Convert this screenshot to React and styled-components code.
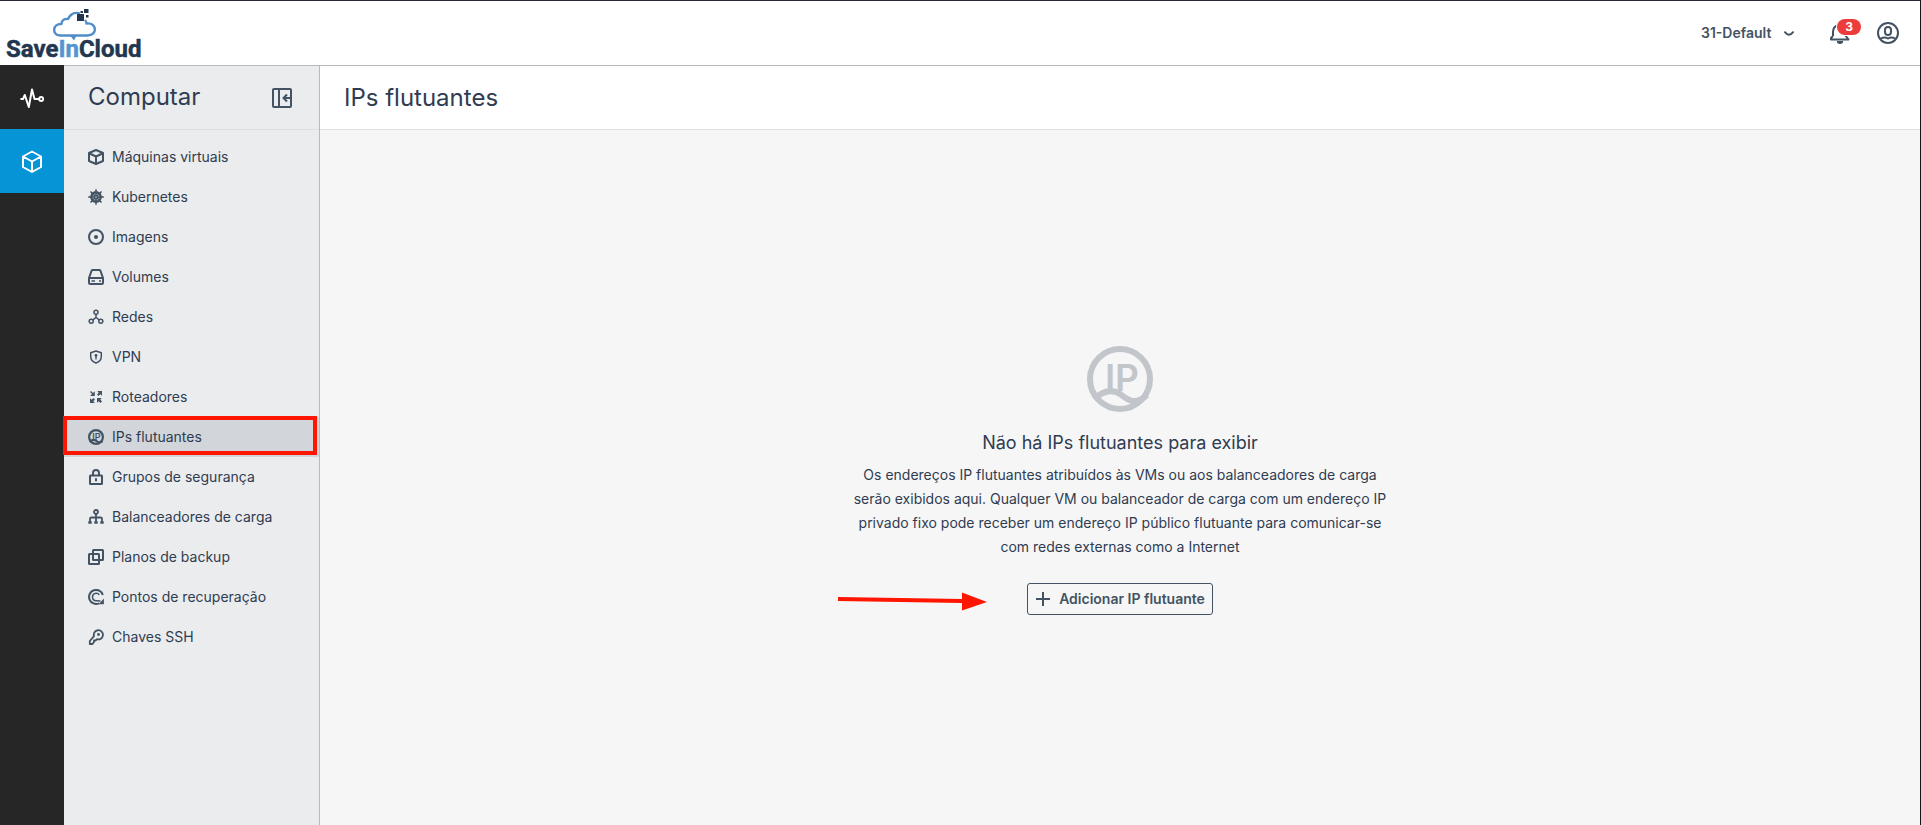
import React from "react";
import styled, { createGlobalStyle } from "styled-components";

const color = {
  ink: "#2f3c51",
  icon: "#435363",
  line: "#b7bbc0",
  softLine: "#dddfe2",
  panel: "#ebecee",
  selected: "#d2d5da",
  canvas: "#f6f6f6",
  rail: "#262626",
  accent: "#0594d6",
  alert: "#ed3a3b",
  mark: "#ff1500",
  faded: "#c2c6cb",
};

const GlobalStyle = createGlobalStyle`
  *, *::before, *::after { box-sizing: border-box; }
  body { margin: 0; font-family: Inter, "Liberation Sans", sans-serif; font-size: 14px; color: ${color.ink}; }
  button, select { font: inherit; color: inherit; }
`;

const Page = styled.div`
  min-height: 100vh;
  display: flex;
  flex-direction: column;
  border-top: 1px solid #2e2639;
  border-right: 1px solid #16161c;
  background: #fff;
`;

const TopBar = styled.header`
  height: 64px;
  display: flex;
  align-items: center;
  justify-content: space-between;
  padding: 0 20px 0 4px;
`;

const LogoLink = styled.a`
  display: block;
  height: 64px;
`;

const TopActions = styled.div`
  display: flex;
  align-items: center;
`;

const ProjectPicker = styled.label`
  position: relative;
  display: flex;
  align-items: center;
  margin-right: 34px;
`;

const ProjectSelect = styled.select`
  appearance: none;
  border: 0;
  background: transparent;
  padding: 0 22px 0 0;
  font-weight: 600;
  line-height: 20px;
  color: ${color.icon};
`;

const PickerChevron = styled.svg`
  position: absolute;
  right: 0;
  top: 8px;
  pointer-events: none;
`;

const IconButton = styled.button`
  position: relative;
  display: flex;
  padding: 0;
  border: 0;
  background: transparent;
  color: ${color.icon};
  margin-right: ${(p) => p.$after || 0}px;
`;

const Badge = styled.span`
  position: absolute;
  left: 9px;
  top: -2px;
  width: 24px;
  height: 16px;
  border-radius: 8px;
  box-shadow: 0 0 0 1px #fff;
  background: ${color.alert};
  color: #fff;
  font-size: 12px;
  font-weight: 700;
  line-height: 16px;
  text-align: center;
`;

const Body = styled.div`
  flex: 1;
  display: grid;
  grid-template-columns: 64px 256px 1fr;
`;

const Rail = styled.nav`
  background: ${color.rail};
  display: flex;
  flex-direction: column;
`;

const RailLink = styled.a`
  height: 64px;
  display: flex;
  align-items: center;
  justify-content: center;
  color: #fff;
  background: ${(p) => (p.$active ? color.accent : "transparent")};
`;

const SidePanel = styled.aside`
  background: ${color.panel};
  border-top: 1px solid ${color.line};
  border-right: 1px solid ${color.line};
`;

const SideHeader = styled.div`
  height: 64px;
  display: flex;
  align-items: center;
  justify-content: space-between;
  padding: 0 26px 0 24px;
  border-bottom: 1px solid ${color.softLine};
`;

const SideTitle = styled.h2`
  margin: 0;
  padding-bottom: 2px;
  font-size: 24px;
  font-weight: 400;
  line-height: 32px;
`;

const Menu = styled.ul`
  list-style: none;
  margin: 0;
  padding: 7px 0;
`;

const MenuItem = styled.li`
  position: relative;
`;

const MenuLink = styled.a`
  height: 40px;
  display: flex;
  align-items: center;
  gap: 8px;
  padding: 0 24px;
  color: ${color.ink};
  text-decoration: none;
  background: ${(p) => (p.$active ? color.selected : "transparent")};

  svg { color: ${color.icon}; flex: none; }
`;

const MenuLabel = styled.span`
  padding-bottom: 2px;
`;

const Highlight = styled.span`
  position: absolute;
  inset: -1px 2px 2px -1px;
  border: 4px solid ${color.mark};
  pointer-events: none;
`;

const Main = styled.main`
  display: flex;
  flex-direction: column;
  background: ${color.canvas};
  border-top: 1px solid ${color.line};
`;

const MainHeader = styled.div`
  height: 64px;
  display: flex;
  align-items: center;
  padding: 0 24px;
  background: #fff;
  border-bottom: 1px solid ${color.softLine};
`;

const PageTitle = styled.h1`
  margin: 0;
  font-size: 24px;
  font-weight: 400;
  line-height: 32px;
`;

const EmptyState = styled.section`
  flex: 1;
  display: flex;
  flex-direction: column;
  align-items: center;
  justify-content: center;
  padding: 24px 24px 26px;
  text-align: center;
`;

const EmptyIcon = styled.div`
  height: 80px;
  color: ${color.faded};
`;

const EmptyTitle = styled.h3`
  margin: 12px 0 8px;
  font-size: 18px;
  font-weight: 400;
  line-height: 24px;
`;

const EmptyText = styled.p`
  margin: 0 0 24px;
  max-width: 544px;
  line-height: 24px;
`;

const AddButton = styled.button`
  position: relative;
  height: 32px;
  display: flex;
  align-items: center;
  gap: 8px;
  padding: 0 7px;
  border: 1px solid ${color.icon};
  border-radius: 3px;
  background: transparent;
  font-weight: 600;
  color: ${color.icon};
`;

const Arrow = styled.svg`
  position: absolute;
  right: calc(100% + 41px);
  top: 8px;
  pointer-events: none;
`;

const Wordmark = styled.text`
  font-family: Roboto, "Liberation Sans", sans-serif;
  font-size: 24px;
  font-weight: 700;
  fill: #22374f;
  stroke: #22374f;
  stroke-width: 0.5px;
  stroke-linejoin: round;

  tspan { fill: #5593d1; stroke: #5593d1; }
`;

function Logo() {
  return (
    <svg width="144" height="64" viewBox="0 0 144 64" role="img" aria-label="SaveInCloud">
      <path
        d="M56 34.500 C47.500 34 48.500 22.500 57.500 23 C57.500 19 61 17.500 64 18 C67 12 72 11 76 12.500 M81 19 C82 20 82.500 21 82.500 22.500 C93 21 94 34.500 83.500 34.500 H56"
        fill="none" stroke="#4f8dcb" strokeWidth="2.400" strokeLinejoin="round"
      />
      <path d="M66 34.500 H72.500 L70 39.500 Z" fill="#4f8dcb" />
      <path d="M73 13h7v7h-7z M80 8h4.500v4H80z M76.500 10h2.500v2h-2.500z M82 14h2.500v2.500H82z" fill="#22374f" />
      <Wordmark x="2" y="56">
        Save<tspan>In</tspan>Cloud
      </Wordmark>
    </svg>
  );
}

function Glyph({ size = 16, weight = 2, children }) {
  return (
    <svg width={size} height={size} viewBox="0 0 16 16" fill="none" stroke="currentColor" strokeWidth={weight} aria-hidden="true">
      {children}
    </svg>
  );
}

function FloatingIp({ size, box, weight }) {
  return (
    <svg width={size} height={size} viewBox={box} fill="none" stroke="currentColor" strokeWidth={weight} aria-hidden="true">
      <circle cx="40" cy="40" r={33 - weight / 2} />
      <path d="M14 60 C24 51 32 50 40 55 C48 61 55 67 67 56" />
      <text x="25 35" y="52" fontSize="37" fontWeight="600" fill="currentColor" stroke="none">IP</text>
    </svg>
  );
}

const spokes = [0, 45, 90, 135, 180, 225, 270, 315];

const icons = {
  cube: (
    <Glyph>
      <path d="M8 1 L15 4 V12 L8 15 L1 12 V4 Z M1.500 4.500 L8 7.500 L14.500 4.500 M8 7.500 V15" strokeLinejoin="round" />
    </Glyph>
  ),
  wheel: (
    <Glyph>
      <circle cx="8" cy="8" r="5.900" fill="currentColor" stroke="none" />
      {spokes.map((a) => (
        <g key={a} transform={`rotate(${a} 8 8)`}>
          <path d="M8 3 V0.200" strokeWidth="1.500" />
          <circle cx="9.200" cy="5.200" r="0.500" fill={color.panel} stroke="none" />
        </g>
      ))}
      <circle cx="8" cy="8" r="0.700" fill={color.panel} stroke="none" />
    </Glyph>
  ),
  disc: (
    <Glyph>
      <circle cx="8" cy="8" r="7" />
      <circle cx="8" cy="8" r="2" fill="currentColor" stroke="none" />
    </Glyph>
  ),
  drive: (
    <Glyph>
      <path d="M1 9 L3.500 1.800 Q3.800 1 4.700 1 H11.300 Q12.200 1 12.500 1.800 L15 9 V13.800 Q15 15 13.700 15 H2.300 Q1 15 1 13.800 Z M1 9 H15" strokeLinejoin="round" />
      <path d="M3.500 12 H7 M11 12 H13" strokeWidth="1.500" />
    </Glyph>
  ),
  nodes: (
    <Glyph weight={1.5}>
      <circle cx="8" cy="3.200" r="2" />
      <circle cx="3.200" cy="12.200" r="2" />
      <circle cx="12.800" cy="12.200" r="2" />
      <path d="M8 5 V8.500 L4.800 10.800 M8 8.500 L11.200 10.800" />
    </Glyph>
  ),
  shield: (
    <Glyph weight={1.5}>
      <path d="M8 2 L13.300 3.700 V7.500 C13.300 11 11 13 8 14 C5 13 2.700 11 2.700 7.500 V3.700 Z" strokeLinejoin="round" />
      <path d="M8 6 V10.500" strokeWidth="1.400" />
      <circle cx="8" cy="6.500" r="1.400" fill="currentColor" stroke="none" />
    </Glyph>
  ),
  router: (
    <Glyph>
      <path
        d="M2 3 L3 2 L5 4 L6.800 2.200 V7 H2.200 L4 5 Z M9.200 2 H14 V6.800 L12.300 5.300 L10.500 7 L9 5.500 L10.700 3.800Z M2 9.200 L3.700 10.700 L5.500 9 L7 10.500 L5.300 12.300 L6.800 14 H2Z M9 9 H13.800 L12.300 10.500 L14 12.500 L12.500 14 L10.700 12.200 L9 13.800Z"
        fill="currentColor" stroke="none"
      />
    </Glyph>
  ),
  ip: <FloatingIp size={16} box="7 7 66 66" weight={9} />,
  lock: (
    <Glyph>
      <rect x="2" y="6.500" width="12" height="8.500" rx="0.500" />
      <path d="M5 6.500 V4 A3 3 0 0 1 11 4 V6.500 M8 9.300 V12.300" />
    </Glyph>
  ),
  balancer: (
    <Glyph weight={1.8}>
      <circle cx="8" cy="3" r="2" />
      <path d="M8 5 V14 M2 14 V9.800 Q2 8.500 3.300 8.500 H12.700 Q14 8.500 14 9.800 V14" />
      <path d="M0.300 13.600 H3.700 M6.300 13.600 H9.700 M12.300 13.600 H15.700" strokeWidth="2.500" />
    </Glyph>
  ),
  copies: (
    <Glyph>
      <rect x="1" y="5" width="10" height="10" rx="0.500" />
      <rect x="5" y="1" width="10" height="10" rx="0.500" />
    </Glyph>
  ),
  restore: (
    <Glyph>
      <path d="M14.800 6 A7 7 0 1 0 11 14.300" />
      <path d="M11.300 5.800 A3.800 3.800 0 1 0 8.500 11.800 L12.500 12" strokeWidth="1.600" />
      <path d="M15.900 9.500 V15.200 H10.500 Z" fill="currentColor" stroke="none" />
    </Glyph>
  ),
  key: (
    <Glyph weight={1.8}>
      <path d="M6 7.200 A4.600 4.600 0 1 1 9 10.200 L7.500 11.500 H6 V13 L4.500 15 H1.800 V12 Z" strokeLinejoin="round" />
      <circle cx="10.500" cy="5.500" r="1.400" fill="currentColor" stroke="none" />
    </Glyph>
  ),
};

const menu = [
  ["cube", "Máquinas virtuais"],
  ["wheel", "Kubernetes"],
  ["disc", "Imagens"],
  ["drive", "Volumes"],
  ["nodes", "Redes"],
  ["shield", "VPN"],
  ["router", "Roteadores"],
  ["ip", "IPs flutuantes"],
  ["lock", "Grupos de segurança"],
  ["balancer", "Balanceadores de carga"],
  ["copies", "Planos de backup"],
  ["restore", "Pontos de recuperação"],
  ["key", "Chaves SSH"],
];

export default function App() {
  return (
    <>
      <GlobalStyle />
      <Page>
        <TopBar>
          <LogoLink href="#inicio"><Logo /></LogoLink>
          <TopActions>
            <ProjectPicker>
              <ProjectSelect aria-label="Projeto" defaultValue="31-Default">
                <option>31-Default</option>
              </ProjectSelect>
              <PickerChevron width="10" height="6" viewBox="0 0 10 6" fill="none" stroke={color.icon} strokeWidth="2" strokeLinecap="round" aria-hidden="true">
                <path d="M1 1.200 Q5 6.500 9 1.200" />
              </PickerChevron>
            </ProjectPicker>
            <IconButton aria-label="Notificações" $after={26}>
              <svg width="22" height="24" viewBox="0 0 22 24" fill="none" stroke="currentColor" strokeWidth="2" aria-hidden="true">
                <path d="M5 15 V11 C5 7.500 7 5 10 4.200 M17.500 12 V14.500 L20.500 18.500 H3 V17 L5 15" strokeLinejoin="round" />
                <path d="M8.800 20 H15.200 A3.200 3 0 0 1 8.800 20 Z" fill="currentColor" stroke="none" />
              </svg>
              <Badge>3</Badge>
            </IconButton>
            <IconButton aria-label="Conta">
              <svg width="24" height="24" viewBox="0 0 24 24" fill="none" stroke="currentColor" strokeWidth="2" aria-hidden="true">
                <circle cx="12" cy="12" r="10" />
                <rect x="9" y="6" width="6" height="8" rx="3" />
                <path d="M5 17.500 Q8.500 15.500 12 17.500 Q15.500 15.500 19 17.500" />
              </svg>
            </IconButton>
          </TopActions>
        </TopBar>
        <Body>
          <Rail aria-label="Serviços">
            <RailLink href="#monitor" aria-label="Monitoramento">
              <svg width="24" height="24" viewBox="0 0 24 24" fill="none" stroke="currentColor" strokeWidth="2" strokeLinejoin="round" strokeLinecap="round" aria-hidden="true">
                <path d="M1.200 14 H3 L4.800 10 L8.800 22 L12 4.500 L14.500 14 H19" />
                <circle cx="21.200" cy="14" r="2" />
              </svg>
            </RailLink>
            <RailLink href="#computar" aria-label="Computar" $active>
              <svg width="24" height="24" viewBox="0 0 24 24" fill="none" stroke="currentColor" strokeWidth="2" strokeLinejoin="round" aria-hidden="true">
                <path d="M12 2.500 L21 7.500 V18 L12 23 L3 18 V7.500 Z M3 7.500 L12 12.500 L21 7.500 M12 12.500 V23" />
              </svg>
            </RailLink>
          </Rail>
          <SidePanel>
            <SideHeader>
              <SideTitle>Computar</SideTitle>
              <IconButton aria-label="Recolher menu">
                <svg width="22" height="22" viewBox="0 0 22 22" fill="none" stroke="currentColor" strokeWidth="2" aria-hidden="true">
                  <rect x="2" y="2" width="18" height="18" rx="1" />
                  <path d="M8 2 V20 M19 11 H13 M16 7.500 L12.500 11 L16 14.500" />
                </svg>
              </IconButton>
            </SideHeader>
            <nav aria-label="Computar">
              <Menu>
                {menu.map(([icon, label]) => (
                  <MenuItem key={icon}>
                    <MenuLink href={`#${icon}`} $active={icon === "ip"}>
                      {icons[icon]}
                      <MenuLabel>{label}</MenuLabel>
                    </MenuLink>
                    {icon === "ip" && <Highlight />}
                  </MenuItem>
                ))}
              </Menu>
            </nav>
          </SidePanel>
          <Main>
            <MainHeader>
              <PageTitle>IPs flutuantes</PageTitle>
            </MainHeader>
            <EmptyState>
              <EmptyIcon>
                <FloatingIp size={80} box="0 0 80 80" weight={6} />
              </EmptyIcon>
              <EmptyTitle>Não há IPs flutuantes para exibir</EmptyTitle>
              <EmptyText>
                Os endereços IP flutuantes atribuídos às VMs ou aos balanceadores de carga serão exibidos aqui. Qualquer
                VM ou balanceador de carga com um endereço IP privado fixo pode receber um endereço IP público flutuante
                para comunicar-se com redes externas como a Internet
              </EmptyText>
              <AddButton>
                <Glyph>
                  <path d="M8 1 V15 M1 8 H15" />
                </Glyph>
                Adicionar IP flutuante
                <Arrow width="149" height="20" viewBox="0 0 149 20" fill={color.mark} aria-hidden="true">
                  <path d="M0 5 L124 7 V0.500 L149 10 L124 18.500 V11 L0 9 Z" />
                </Arrow>
              </AddButton>
            </EmptyState>
          </Main>
        </Body>
      </Page>
    </>
  );
}
